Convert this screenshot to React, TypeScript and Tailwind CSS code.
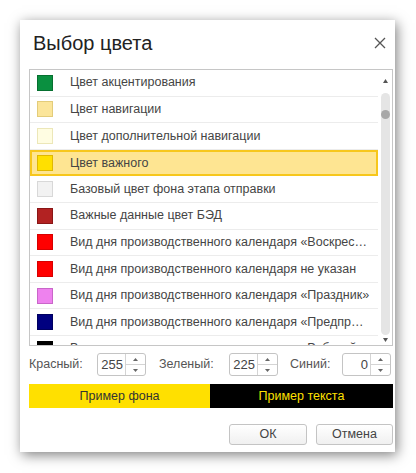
import React from "react";

const rows: { name: string; fill: string; border: string }[] = [
  { name: "Цвет акцентирования", fill: "#0a9040", border: "#067030" },
  { name: "Цвет навигации", fill: "#fbe59a", border: "#e3cc7a" },
  { name: "Цвет дополнительной навигации", fill: "#fffde2", border: "#ece7b8" },
  { name: "Цвет важного", fill: "#ffe000", border: "#e0b800" },
  { name: "Базовый цвет фона этапа отправки", fill: "#f2f2f2", border: "#d8d8d8" },
  { name: "Важные данные цвет БЭД", fill: "#b22222", border: "#8a1616" },
  { name: "Вид дня производственного календаря «Воскресенье»", fill: "#ff0000", border: "#d80000" },
  { name: "Вид дня производственного календаря не указан", fill: "#ff0000", border: "#d80000" },
  { name: "Вид дня производственного календаря «Праздник»", fill: "#ee82ee", border: "#c966c9" },
  { name: "Вид дня производственного календаря «Предпраздничный»", fill: "#000080", border: "#000060" },
  { name: "Вид дня производственного календаря «Рабочий»", fill: "#000000", border: "#000000" },
];

function Spin({ value }: { value: string }) {
  return (
    <div className="flex h-[23px] w-[49px] rounded-[3px] border border-[#c4c4c4] bg-white">
      <div className="flex flex-1 items-center justify-end pr-[2px] text-[13px] text-[#444]">{value}</div>
      <div className="flex w-[20px] flex-col border-l border-[#d4d4d4]">
        <div className="flex flex-1 items-center justify-center border-b border-[#d4d4d4]">
          <svg width="5" height="3" viewBox="0 0 5 3"><path d="M0 3 L2.5 0 L5 3 Z" fill="#666" /></svg>
        </div>
        <div className="flex flex-1 items-center justify-center">
          <svg width="5" height="3" viewBox="0 0 5 3"><path d="M0 0 L2.5 3 L5 0 Z" fill="#666" /></svg>
        </div>
      </div>
    </div>
  );
}

export default function App() {
  return (
    <div
      className="h-[473px] w-[416px] overflow-hidden bg-white pl-[20px] pt-[20px]"
      style={{ fontFamily: '"Liberation Sans", Arial, sans-serif' }}
    >
      <div className="flex h-[432px] w-[375px] flex-col bg-white shadow-[2px_3px_12px_rgba(0,0,0,0.5)]">
        {/* Title */}
        <div className="flex h-[49px] items-center justify-between pl-[13px] pr-[8px] pb-[4px]">
          <span className="text-[20px] text-[#222]">Выбор цвета</span>
          <svg width="12" height="12" viewBox="0 0 12 12" className="mr-[1px]">
            <path d="M1 1 L11 11 M11 1 L1 11" stroke="#555" strokeWidth="1.3" />
          </svg>
        </div>

        {/* List */}
        <div className="ml-[9px] flex h-[277px] w-[364px] overflow-hidden border border-[#c6c6c6]">
          <div className="flex-1 overflow-hidden">
            {rows.map((r, i) => {
              const sel = i === 3;
              return (
                <div
                  key={i}
                  className={
                    sel
                      ? "flex h-[26.6px] items-center border-2 border-[#f7c71c] bg-[#fee592] pl-[5px]"
                      : "flex h-[26.6px] items-center border-b border-[#ececec] pl-[7px]"
                  }
                >
                  <div
                    className="h-[16px] w-[16px] shrink-0 border"
                    style={{ background: r.fill, borderColor: r.border }}
                  />
                  <span className="ml-[17px] truncate pr-[8px] text-[12.5px] text-[#454545]">{r.name}</span>
                </div>
              );
            })}
          </div>
          <div className="relative flex w-[14px] flex-col items-center">
            <div className="mt-[9px] h-[6px]">
              <svg width="5" height="4" viewBox="0 0 5 4"><path d="M0 4 L2.5 0 L5 4 Z" fill="#555" /></svg>
            </div>
            <div className="relative mt-[8px] h-[242px] w-[9px] rounded-full bg-[#e5e5e5]">
              <div className="absolute left-0 top-[17px] h-[9px] w-[9px] rounded-full bg-[#a8a8a8]" />
            </div>
            <div className="mt-[3px]">
              <svg width="5" height="4" viewBox="0 0 5 4"><path d="M0 0 L2.5 4 L5 0 Z" fill="#555" /></svg>
            </div>
          </div>
        </div>

        {/* RGB */}
        <div className="mt-[7px] flex h-[23px] items-center pl-[9px] text-[12.5px] text-[#555]">
          <span className="w-[68px]">Красный:</span>
          <Spin value="255" />
          <span className="ml-[13px] w-[70px]">Зеленый:</span>
          <Spin value="225" />
          <span className="ml-[12px] w-[52px]">Синий:</span>
          <Spin value="0" />
        </div>

        {/* Preview */}
        <div className="ml-[9px] mt-[8px] flex h-[24px] w-[364px] text-[12.5px]">
          <div className="flex w-[181px] items-center justify-center bg-[#ffe000] text-[#333]">Пример фона</div>
          <div className="flex flex-1 items-center justify-center bg-black text-[#ffe000]">Пример текста</div>
        </div>

        {/* Buttons */}
        <div className="mt-[16px] flex justify-end gap-[9px] pr-[2px]">
          <button className="h-[21px] w-[78px] rounded-[3px] border border-[#c4c4c4] bg-gradient-to-b from-white to-[#f0f0f0] text-[12.5px] text-[#444]">
            ОК
          </button>
          <button className="h-[21px] w-[77px] rounded-[3px] border border-[#c4c4c4] bg-gradient-to-b from-white to-[#f0f0f0] text-[12.5px] text-[#444]">
            Отмена
          </button>
        </div>
      </div>
    </div>
  );
}
